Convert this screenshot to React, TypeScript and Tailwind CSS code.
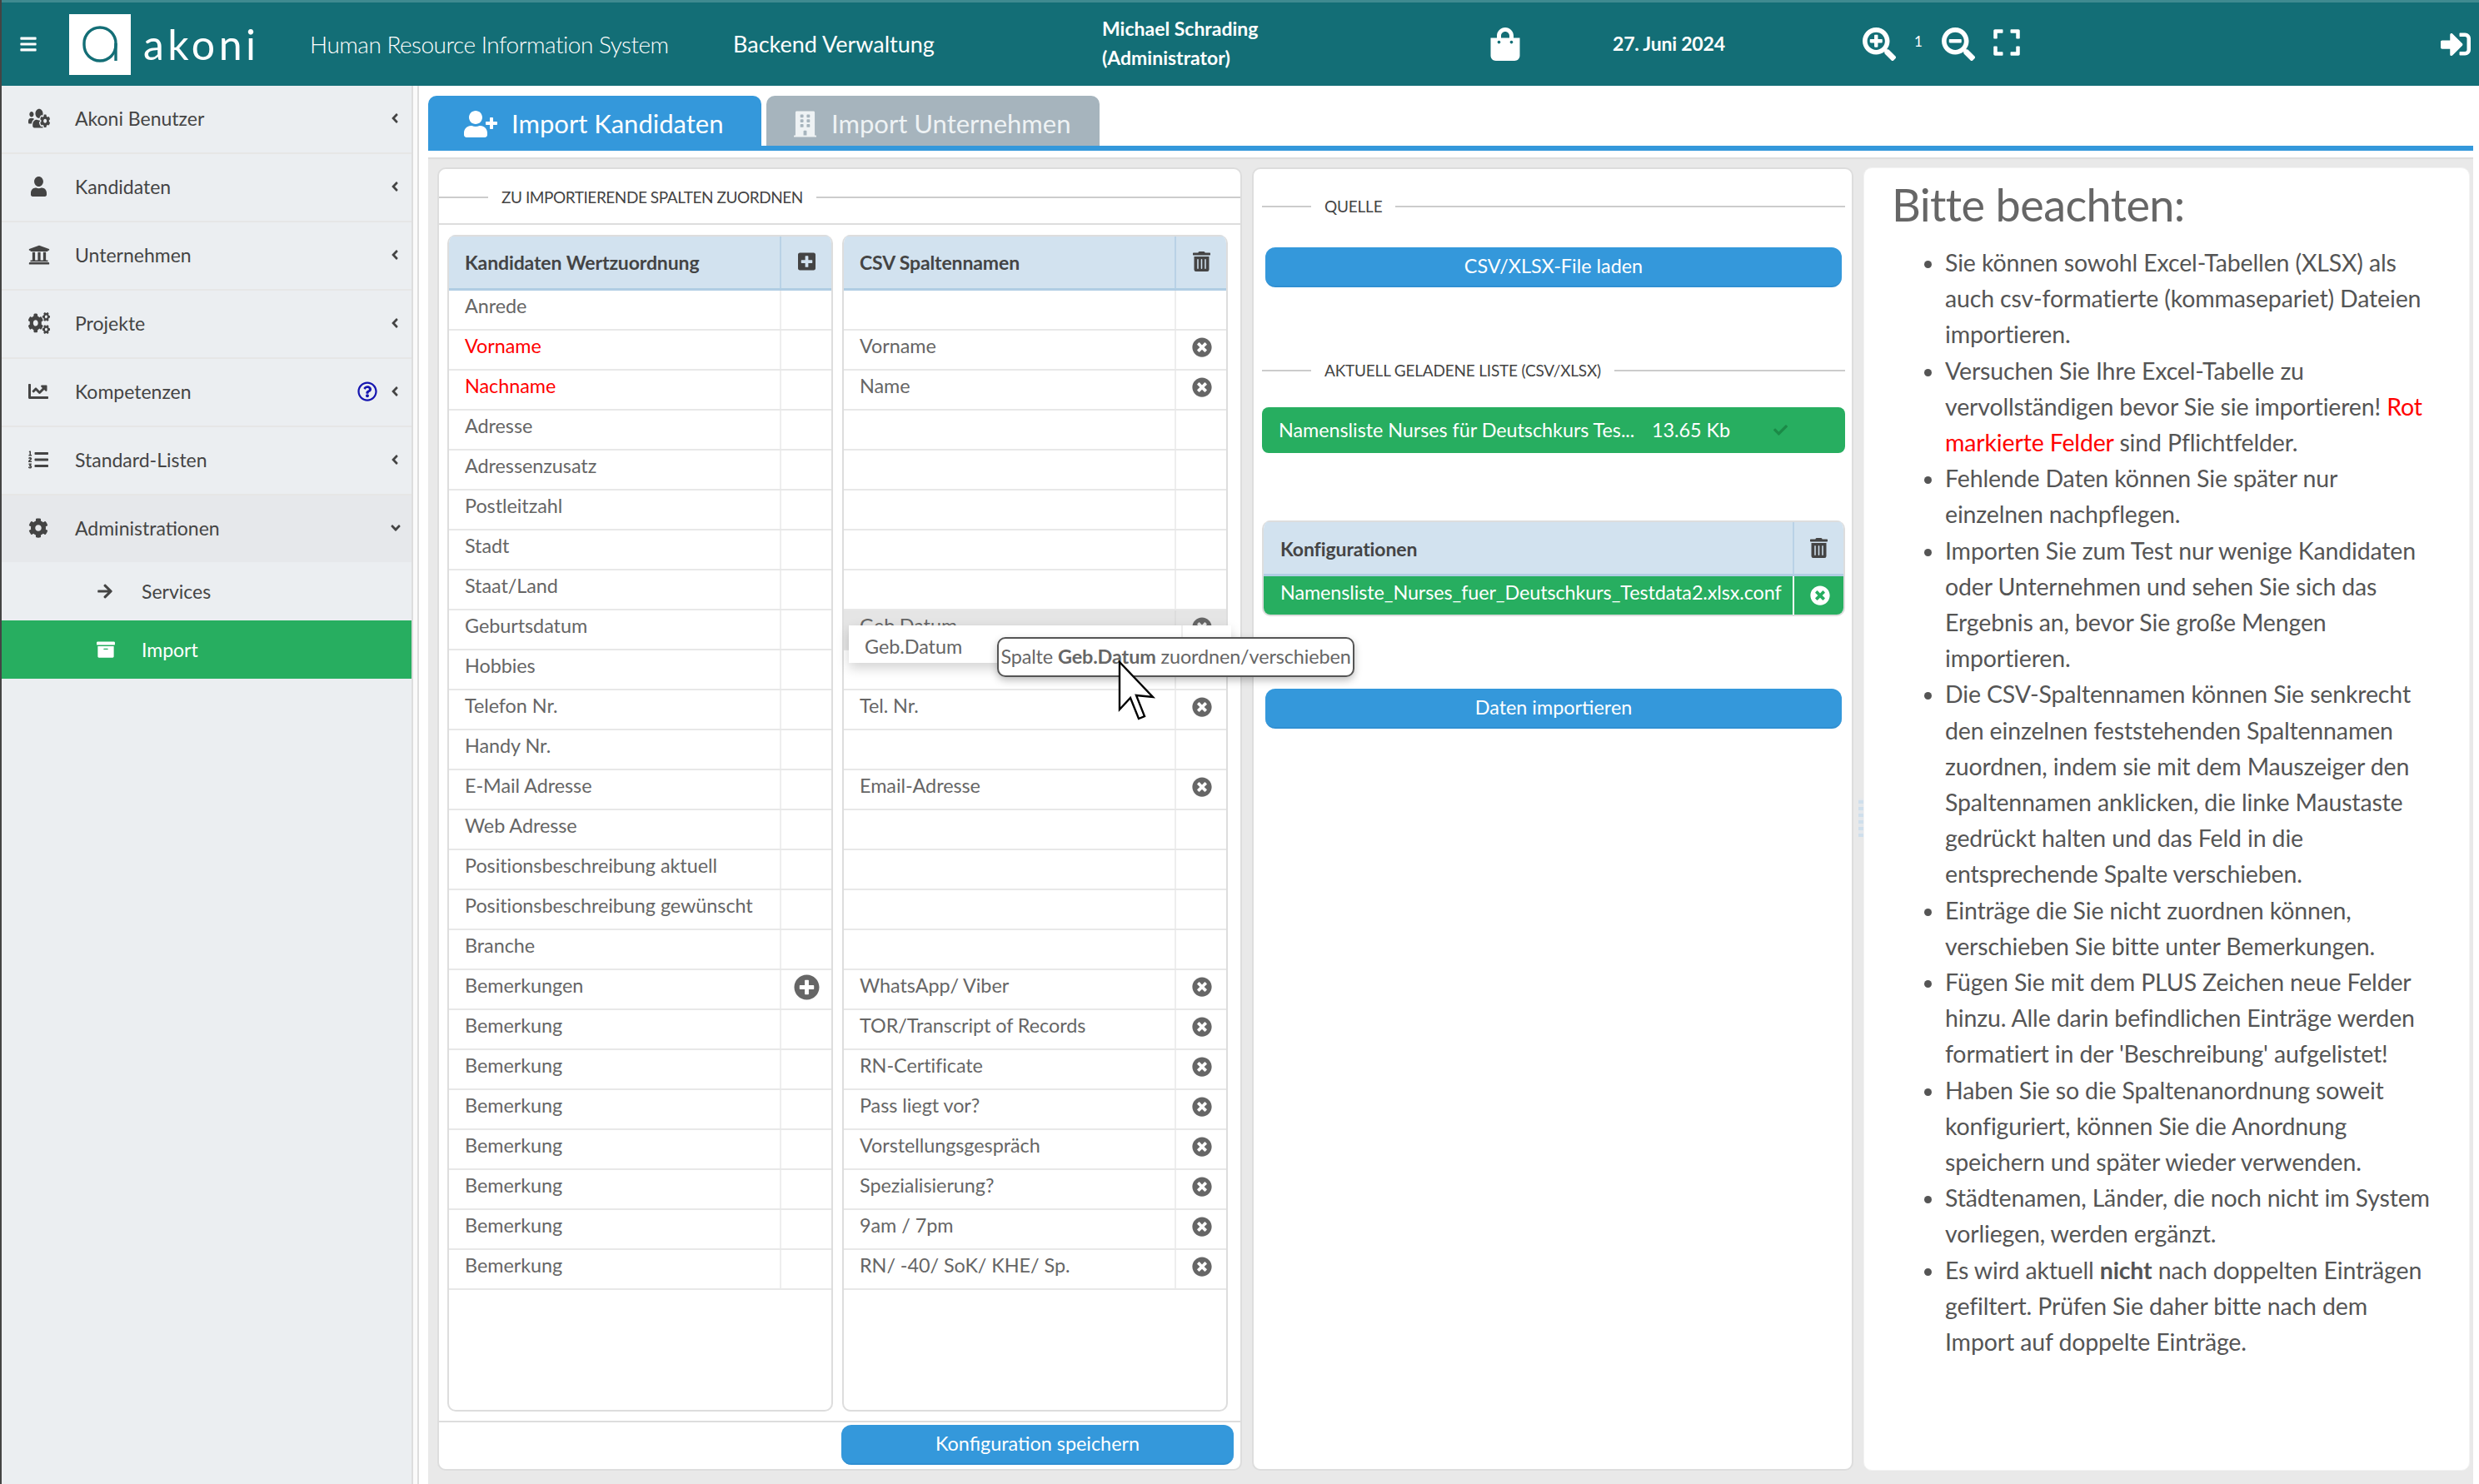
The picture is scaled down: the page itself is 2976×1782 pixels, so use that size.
import type { ReactNode } from 'react'
import {
  FaAngleDown,
  FaAngleLeft,
  FaArchive,
  FaArrowRight,
  FaBars,
  FaBuilding,
  FaChartLine,
  FaCheck,
  FaCog,
  FaCogs,
  FaExpand,
  FaListOl,
  FaPlusCircle,
  FaPlusSquare,
  FaRegQuestionCircle,
  FaSearchMinus,
  FaSearchPlus,
  FaShoppingBag,
  FaSignInAlt,
  FaTimesCircle,
  FaTrashAlt,
  FaUniversity,
  FaUser,
  FaUserPlus,
  FaUsersCog,
} from 'react-icons/fa'

const menu = [
  { label: 'Akoni Benutzer', Icon: FaUsersCog, iconClass: 'h-[26px] w-[26px]' },
  { label: 'Kandidaten', Icon: FaUser, iconClass: 'ml-[3px] h-[24px] w-[19px]' },
  { label: 'Unternehmen', Icon: FaUniversity, iconClass: 'h-[26px] w-[26px]' },
  { label: 'Projekte', Icon: FaCogs, iconClass: 'h-[26px] w-[26px]' },
  { label: 'Kompetenzen', Icon: FaChartLine, iconClass: 'h-[24px] w-[24px]', help: true },
  { label: 'Standard-Listen', Icon: FaListOl, iconClass: 'h-[24px] w-[24px]' },
]

type Row = { left: string; right?: string; red?: boolean; plus?: boolean; dragging?: boolean }

const rows: Row[] = [
  { left: 'Anrede' },
  { left: 'Vorname', right: 'Vorname', red: true },
  { left: 'Nachname', right: 'Name', red: true },
  { left: 'Adresse' },
  { left: 'Adressenzusatz' },
  { left: 'Postleitzahl' },
  { left: 'Stadt' },
  { left: 'Staat/Land' },
  { left: 'Geburtsdatum', right: 'Geb.Datum', dragging: true },
  { left: 'Hobbies' },
  { left: 'Telefon Nr.', right: 'Tel. Nr.' },
  { left: 'Handy Nr.' },
  { left: 'E-Mail Adresse', right: 'Email-Adresse' },
  { left: 'Web Adresse' },
  { left: 'Positionsbeschreibung aktuell' },
  { left: 'Positionsbeschreibung gewünscht' },
  { left: 'Branche' },
  { left: 'Bemerkungen', right: 'WhatsApp/ Viber', plus: true },
  { left: 'Bemerkung', right: 'TOR/Transcript of Records' },
  { left: 'Bemerkung', right: 'RN-Certificate' },
  { left: 'Bemerkung', right: 'Pass liegt vor?' },
  { left: 'Bemerkung', right: 'Vorstellungsgespräch' },
  { left: 'Bemerkung', right: 'Spezialisierung?' },
  { left: 'Bemerkung', right: '9am / 7pm' },
  { left: 'Bemerkung', right: 'RN/ -40/ SoK/ KHE/ Sp.' },
]

function SectionTitle({ children, className = '' }: { children: ReactNode; className?: string }) {
  return (
    <div className={`flex items-center ${className}`}>
      <span className="h-[2px] w-[59px] bg-[#ccc]" />
      <span className="px-[16px] text-[19px] leading-[26px] tracking-[-0.2px] text-[#444] whitespace-nowrap">{children}</span>
      <span className="h-[2px] flex-1 bg-[#ccc]" />
    </div>
  )
}

function PrimaryButton({ children, className = '' }: { children: ReactNode; className?: string }) {
  return (
    <button
      type="button"
      className={`h-[48px] rounded-[12px] border-b-2 border-[#2f8fd2] bg-[#3498db] text-[23.4px] text-white ${className}`}
    >
      {children}
    </button>
  )
}

function MapTable({ title, side }: { title: string; side: 'left' | 'right' }) {
  return (
    <div className="h-[1413px] w-[463px] overflow-hidden rounded-[10px] border-x-2 border-b-2 border-[#ddd]">
      <div className="flex h-[67px] border-t-2 border-b-[3px] border-t-[#ddd] border-b-[#b0cde3] bg-[#d2e2ef]">
        <div className="flex-1 pl-[19px] pt-[14px] text-[23px] font-bold tracking-[-0.12px] text-[#444]">{title}</div>
        <div className="flex w-[62px] items-center justify-center border-l-2 border-[#b9d2e6] pb-[2px] pl-[1px] text-[#444]">
          {side === 'left' ? <FaPlusSquare className="h-[24px] w-[21px]" /> : <FaTrashAlt className="h-[24px] w-[21px]" />}
        </div>
      </div>
      {rows.map((row, index) => {
        const text = side === 'left' ? row.left : row.right
        const isDrag = side === 'right' && row.dragging
        return (
          <div key={index} className={`flex h-[48px] border-b-2 border-[#e8e8e8] ${isDrag ? 'bg-[#e5e5e5]' : ''}`}>
            <div
              className={`flex-1 pl-[19px] pt-[2px] text-[23.4px] leading-[32px] tracking-[-0.05px] ${
                side === 'left' && row.red ? 'text-[#ff0000]' : 'text-[#666]'
              }`}
            >
              {text}
            </div>
            <div className={`flex w-[62px] items-center justify-center border-l-2 pb-[6px] pl-[2px] ${isDrag ? 'border-[#ddd]' : 'border-[#eee]'}`}>
              {side === 'right' && text && <FaTimesCircle className="h-[24px] w-[24px] text-[#666]" />}
              {side === 'left' && row.plus && <FaPlusCircle className="-ml-[2px] h-[31px] w-[31px] text-[#666]" />}
            </div>
          </div>
        )
      })}
    </div>
  )
}

function Sidebar() {
  return (
    <aside className="w-[492px] shrink-0 bg-[#ebeef1] text-[#444]">
      {menu.map(({ label, Icon, iconClass, help }) => (
        <div key={label} className="flex h-[82px] items-center border-b-2 border-[#e6e6e6] pb-[2px] pl-[32px] pr-[14px]">
          <span className="flex w-[56px] justify-start">
            <Icon className={iconClass} preserveAspectRatio="none" />
          </span>
          <span className="flex-1 text-[23px]">{label}</span>
          {help && <FaRegQuestionCircle className="mr-[15px] h-[24px] w-[24px] text-[#1616b0]" />}
          <FaAngleLeft className="h-[18px] w-[12px]" />
        </div>
      ))}
      <div className="flex h-[80px] items-center bg-[#e6e8eb] pb-[2px] pl-[32px] pr-[14px]">
        <span className="flex w-[56px] justify-start">
          <FaCog className="h-[24px] w-[24px]" />
        </span>
        <span className="flex-1 text-[23px]">Administrationen</span>
        <FaAngleDown className="-mr-[2px] h-[18px] w-[14px]" />
      </div>
      <div className="flex h-[70px] items-center pl-[114px] text-[23px]">
        <span className="w-[54px]">
          <FaArrowRight className="h-[20px] w-[20px]" />
        </span>
        Services
      </div>
      <div className="flex h-[70px] items-center bg-[#27ae60] pl-[113px] text-[23px] text-white">
        <span className="w-[55px]">
          <FaArchive className="h-[22px] w-[24px]" />
        </span>
        Import
      </div>
    </aside>
  )
}

function Notes() {
  return (
    <div className="w-[728px] rounded-[10px] border border-[#f3f3f3] bg-white pl-[33px]">
      <h1 className="mt-[14px] text-[54px] leading-[60px] tracking-[-0.6px] text-[#666]">Bitte beachten:</h1>
      <ul className="mt-[18px] list-disc whitespace-nowrap pl-[64px] text-[28.5px] leading-[43.2px] tracking-[-0.15px] text-[#555]">
        <li>
          Sie können sowohl Excel-Tabellen (XLSX) als
          <br />
          auch csv-formatierte (kommasepariet) Dateien
          <br />
          importieren.
        </li>
        <li>
          Versuchen Sie Ihre Excel-Tabelle zu
          <br />
          vervollständigen bevor Sie sie importieren! <span className="text-[#ff0000]">Rot</span>
          <br />
          <span className="text-[#ff0000]">markierte Felder</span> sind Pflichtfelder.
        </li>
        <li>
          Fehlende Daten können Sie später nur
          <br />
          einzelnen nachpflegen.
        </li>
        <li>
          Importen Sie zum Test nur wenige Kandidaten
          <br />
          oder Unternehmen und sehen Sie sich das
          <br />
          Ergebnis an, bevor Sie große Mengen
          <br />
          importieren.
        </li>
        <li>
          Die CSV-Spaltennamen können Sie senkrecht
          <br />
          den einzelnen feststehenden Spaltennamen
          <br />
          zuordnen, indem sie mit dem Mauszeiger den
          <br />
          Spaltennamen anklicken, die linke Maustaste
          <br />
          gedrückt halten und das Feld in die
          <br />
          entsprechende Spalte verschieben.
        </li>
        <li>
          Einträge die Sie nicht zuordnen können,
          <br />
          verschieben Sie bitte unter Bemerkungen.
        </li>
        <li>
          Fügen Sie mit dem PLUS Zeichen neue Felder
          <br />
          hinzu. Alle darin befindlichen Einträge werden
          <br />
          formatiert in der 'Beschreibung' aufgelistet!
        </li>
        <li>
          Haben Sie so die Spaltenanordnung soweit
          <br />
          konfiguriert, können Sie die Anordnung
          <br />
          speichern und später wieder verwenden.
        </li>
        <li>
          Städtenamen, Länder, die noch nicht im System
          <br />
          vorliegen, werden ergänzt.
        </li>
        <li>
          Es wird aktuell <b>nicht</b> nach doppelten Einträgen
          <br />
          gefiltert. Prüfen Sie daher bitte nach dem
          <br />
          Import auf doppelte Einträge.
        </li>
      </ul>
    </div>
  )
}

export default function App() {
  return (
    <div className="relative h-[1782px] w-[2976px] overflow-hidden border-l-2 border-[#444] bg-white font-[Lato,sans-serif]">
      <header className="flex h-[103px] items-center border-t-[3px] border-[#3f8a90] bg-[#136e76] text-white">
        <FaBars className="ml-[21px] h-[22px] w-[22px]" />
        <div className="ml-[38px] flex h-[73px] w-[74px] items-center justify-center bg-white">
          <svg viewBox="0 0 44 44" className="h-[44px] w-[44px]" fill="none" stroke="#136e76" strokeWidth="3.4">
            <rect x="3" y="2" width="38" height="40" rx="19" />
            <path d="M41 21v21" />
          </svg>
        </div>
        <span className="ml-[15px] w-[138px] text-[50px] leading-none tracking-[4.5px]">akoni</span>
        <span className="ml-[62px] w-[431px] whitespace-nowrap text-[28px] font-light tracking-[-0.5px]">Human Resource Information System</span>
        <span className="ml-[77px] w-[242px] whitespace-nowrap text-[27px]">Backend Verwaltung</span>
        <div className="ml-[201px] -mt-[3px] w-[259px] text-[23px] font-bold leading-[35px]">
          Michael Schrading
          <br />
          (Administrator)
        </div>
        <FaShoppingBag className="ml-[207px] h-[40px] w-[36px]" />
        <span className="ml-[111px] mb-[2px] w-[150px] text-[23px] font-bold tracking-[-0.2px]">27. Juni 2024</span>
        <FaSearchPlus className="ml-[150px] h-[40px] w-[40px]" />
        <span className="ml-[22px] mb-[6px] w-[33px] text-[17px]">1</span>
        <FaSearchMinus className="h-[40px] w-[40px]" />
        <FaExpand className="ml-[20px] mb-[4px] h-[36px] w-[36px]" />
        <FaSignInAlt className="ml-auto mr-[8px] h-[36px] w-[40px]" />
      </header>

      <div className="flex h-[1679px]">
        <Sidebar />
        <div className="w-[9px] shrink-0 border-x-2 border-[#ddd] bg-[#fafafa]" />
        <main className="flex min-w-0 flex-1 flex-col pl-[11px] pr-[7px]">
          <div className="mt-[12px] flex h-[66px] border-b-[6px] border-[#3498db]">
            <div className="-mb-[6px] flex h-[66px] w-[400px] items-center gap-[17px] rounded-t-[10px] bg-[#3498db] pl-[43px] pt-[1px] text-[31px] text-white">
              <FaUserPlus className="h-[32px] w-[40px]" />
              Import Kandidaten
            </div>
            <div className="ml-[6px] flex h-[60px] w-[400px] items-center gap-[18px] rounded-t-[10px] bg-[#a6b4bd] pl-[33px] pt-[7px] text-[31px] text-[#eef2f4]">
              <FaBuilding className="h-[34px] w-[27px]" />
              Import Unternehmen
            </div>
          </div>

          <div className="mt-[8px] flex flex-1 gap-[12px] border-t-2 border-[#dedede] bg-[#e9e9e9] pl-[11px] pr-[4px] pt-[10px] pb-[16px]">
            <section className="flex w-[966px] flex-col rounded-[10px] border-2 border-[#ddd] bg-white">
              <div className="flex h-[67px] items-center border-b-2 border-[#ddd] pt-[2px]">
                <SectionTitle className="w-full">
                  <span className="tracking-[-0.45px]">ZU IMPORTIERENDE SPALTEN ZUORDNEN</span>
                </SectionTitle>
              </div>
              <div className="flex gap-[11px] px-[10px] pt-[12px]">
                <MapTable title="Kandidaten Wertzuordnung" side="left" />
                <MapTable title="CSV Spaltennamen" side="right" />
              </div>
              <div className="mt-[11px] flex flex-1 items-start justify-end border-t-2 border-[#ddd] pr-[8px] pt-[3px]">
                <PrimaryButton className="w-[471px]">Konfiguration speichern</PrimaryButton>
              </div>
            </section>

            <section className="flex w-[722px] flex-col rounded-[10px] border-2 border-[#ddd] bg-white pl-[10px] pr-[8px]">
              <SectionTitle className="mt-[32px]">QUELLE</SectionTitle>
              <PrimaryButton className="ml-[4px] mr-[4px] mt-[36px]">CSV/XLSX-File laden</PrimaryButton>
              <SectionTitle className="mt-[87px]">AKTUELL GELADENE LISTE (CSV/XLSX)</SectionTitle>
              <div className="mt-[31px] flex h-[55px] items-center rounded-[8px] bg-[#27ae60] pl-[20px] text-[23.4px] tracking-[-0.05px] text-white">
                <span className="w-[448px] whitespace-nowrap">Namensliste Nurses für Deutschkurs Tes...</span>
                <span className="w-[146px]">13.65 Kb</span>
                <FaCheck className="h-[17px] w-[17px] text-[#1b8a47]" />
              </div>
              <div className="mt-[81px] overflow-hidden rounded-[10px] border-x-2 border-b-2 border-[#ddd]">
                <div className="flex h-[67px] border-t-2 border-b-[3px] border-t-[#ddd] border-b-[#b0cde3] bg-[#d2e2ef]">
                  <div className="flex-1 pl-[20px] pt-[15px] text-[23px] font-bold tracking-[-0.1px] text-[#444]">Konfigurationen</div>
                  <div className="flex w-[61px] items-center justify-center border-l-2 border-[#b9d2e6] text-[#444]">
                    <FaTrashAlt className="h-[24px] w-[21px]" />
                  </div>
                </div>
                <div className="flex h-[46px] bg-[#27ae60] text-white">
                  <div className="flex-1 whitespace-nowrap pl-[20px] pt-[2px] text-[23.4px] tracking-[-0.1px]">Namensliste_Nurses_fuer_Deutschkurs_Testdata2.xlsx.conf</div>
                  <div className="flex w-[61px] items-center justify-center border-l-2 border-white pl-[2px]">
                    <FaTimesCircle className="h-[24px] w-[24px]" />
                  </div>
                </div>
              </div>
              <PrimaryButton className="ml-[4px] mr-[4px] mt-[87px]">Daten importieren</PrimaryButton>
            </section>

            <Notes />
          </div>
        </main>
      </div>

      {/* splitter grip between the cards */}
      <div className="absolute left-[2229px] top-[959px] h-[46px] w-[6px] bg-[repeating-linear-gradient(0deg,#cfdfec_0,#cfdfec_4px,#e4e8ec_4px,#e4e8ec_8px)]" />

      {/* dragged column, tooltip and pointer lie over the table */}
      <div className="absolute left-[1017px] top-[751px] flex h-[45px] w-[459px] bg-white shadow-[0_6px_14px_rgba(0,0,0,0.18)]">
        <div className="flex-1 pl-[19px] pt-[9px] text-[23.4px] leading-[32px] tracking-[-0.05px] text-[#666]">Geb.Datum</div>
        <div className="w-[60px] border-l-2 border-[#eee]" />
      </div>
      <div className="absolute left-[1195px] top-[765px] flex h-[48px] w-[429px] items-center justify-center whitespace-nowrap rounded-[10px] border-2 border-[#555] bg-white text-[23.4px] tracking-[-0.12px] text-[#666] shadow-[0_4px_10px_rgba(0,0,0,0.25)]">
        Spalte&nbsp;<b>Geb.Datum</b>&nbsp;zuordnen/verschieben
      </div>
      <svg className="absolute left-[1340px] top-[793px] h-[74px] w-[46px]" viewBox="0 0 46 74">
        <path d="M2 2V59L15 45L25 70L32 67L22 42L42 44Z" fill="#fff" stroke="#000" strokeWidth="2.4" strokeLinejoin="miter" />
      </svg>
    </div>
  )
}
